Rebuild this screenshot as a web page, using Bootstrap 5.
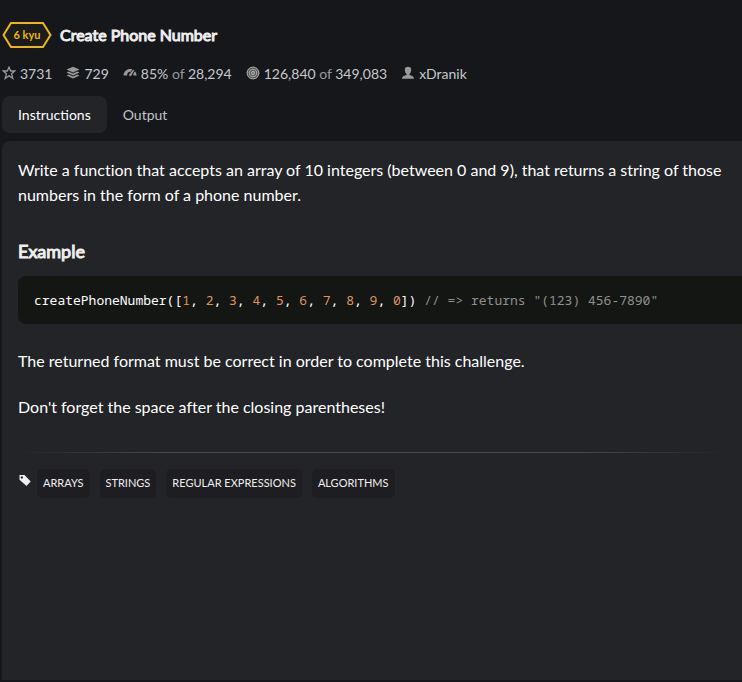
<!DOCTYPE html>
<html lang="en" data-bs-theme="dark">
<head>
<meta charset="utf-8">
<meta name="viewport" content="width=device-width, initial-scale=1">
<title>Create Phone Number</title>
<link href="https://cdn.jsdelivr.net/npm/bootstrap@5.3.0/dist/css/bootstrap.min.css" rel="stylesheet">
<style>
body { background: #16171b; color: #fff; font: 16px/25px Lato, "Open Sans", sans-serif; font-variant-ligatures: none; }
.kata { padding: 20px 0 2px 2px; }
.rank { width: 50px; height: 30px; color: #ecb613; font-size: 11px; line-height: 30px; font-weight: 700; }
.rank svg { position: absolute; inset: 0; }
.heavy { -webkit-text-stroke: 1px currentColor; font-weight: 400; color: #efefef; font-size: 18px; line-height: 30px; }
.title { font-size: 16px; }
.stats { color: #999; font-size: 14px; line-height: 24px; margin-top: 12px; gap: 14px; }
.stats a, .stats b { color: #c5c8cc; font-weight: 400; text-decoration: none; }
.stats svg { fill: #999; margin-right: 4px; vertical-align: -1px; }
.tabs { margin-top: 10px; }
.tabs .nav-link { background: transparent; border: 0; color: #c0c3c8; font-size: 14px; line-height: 21px; padding: 8px 16px; border-radius: 8px; }
.tabs .nav-link.active { background: #222427; color: #fff; }
.panel { background: #222427; margin-top: 8px; padding: 16px 0 0 16px; border-radius: 8px 0 0 0; }
.panel p { margin-bottom: 21px; padding-right: 16px; }
.panel h3 { margin: 29px 0 10px; }
.code { background: #141614; color: #fff; padding: 12px 16px; margin-bottom: 24px; border-radius: 8px 0 0 8px; font: 13px/24px "Noto Sans Mono", "DejaVu Sans Mono", monospace; }
.code code { font: inherit; color: inherit; }
.code i { font-style: normal; color: #de935f; }
.code span { color: #8e908f; }
.rule { height: 1px; margin: 33px 16px 16px 0; background: linear-gradient(90deg, transparent, #45474a 20%, #45474a 80%, transparent); }
.topics { gap: 10px; }
.topics svg { margin: 5px -5px 0 0; }
.topic { background: #1e1d21; border-radius: 5px; padding: 5px 6px 7px; font-size: 11px; line-height: 17px; color: #efefef; }
</style>
<script src="https://cdn.jsdelivr.net/npm/bootstrap@5.3.0/dist/js/bootstrap.bundle.min.js"></script>
</head>
<body>
<main class="kata min-vh-100 d-flex flex-column">
  <header class="d-flex align-items-center gap-2">
    <div class="rank position-relative text-center"><svg width="50" height="30" viewBox="0 0 50 30" fill="#1b1c1b" stroke="#ecb613" stroke-width="2" aria-hidden="true"><path d="M9 3H41L48.500 15L41 27H9L1.500 15Z"/></svg><span class="position-relative">6 kyu</span></div>
    <h1 class="heavy title m-0">Create Phone Number</h1>
  </header>
  <div class="stats d-flex flex-wrap">
    <span><svg width="14" height="14" viewBox="0 0 14 14"><path fill="none" stroke="#999" stroke-width="1.300" d="M7 1.200L8.700 5H12.800L9.600 7.800L10.800 12.400L7 9.800L3.200 12.400L4.400 7.800L1.200 5H5.300Z"/></svg><b>3731</b></span>
    <span><svg width="14" height="14" viewBox="0 0 14 14"><path d="M7 .8L13.500 3.600L7 6.400L.5 3.600Z"/><path d="M.5 6.500L2.600 5.600L7 7.500L11.400 5.600L13.500 6.500L7 9.400Z"/><path d="M.5 9.500L2.600 8.600L7 10.500L11.400 8.600L13.500 9.500L7 12.600Z"/></svg><b>729</b></span>
    <span><svg width="14" height="14" viewBox="0 0 14 14"><path d="M.5 9.500C1 4.500 5 2 9.300 3.300L7.600 5.800C5.500 5.500 4.200 7 4 9.500ZM10 3.800L11.300 4.300L8.300 9.500C7.500 10.800 5.600 10 6.200 8.600ZM12 5.200C13 6.300 13.500 8 13.500 9.500H10.500C10.500 8.800 10.400 8.400 10.300 8Z"/></svg><b>85%</b> of <b>28,294</b></span>
    <span><svg width="14" height="14" viewBox="0 0 14 14"><circle cx="7" cy="7" r="6.300" fill="#555"/><g fill="none" stroke="#aaa"><circle cx="7" cy="7" r="5.900"/><circle cx="7" cy="7" r="3.800"/><circle cx="7" cy="7" r="1.500" stroke-width="1.300"/></g></svg><b>126,840</b> of <b>349,083</b></span>
    <span><svg width="14" height="14" viewBox="0 0 14 14"><path d="M7 .8C9 .8 10.200 2 10.200 4C10.200 6 9.300 7.300 8.500 8V9C10.500 9.600 12.700 10 13 12.800H1C1.300 10 3.500 9.600 5.500 9V8C4.700 7.300 3.800 6 3.800 4C3.800 2 5 .8 7 .8Z"/></svg><a href="#">xDranik</a></span>
  </div>
  <ul class="tabs nav" role="tablist">
    <li class="nav-item" role="presentation"><button class="nav-link active" type="button" role="tab" aria-selected="true">Instructions</button></li>
    <li class="nav-item" role="presentation"><button class="nav-link" type="button" role="tab" aria-selected="false">Output</button></li>
  </ul>
  <section class="panel flex-grow-1">
    <p>Write a function that accepts an array of 10 integers (between 0 and 9), that returns a string of those numbers in the form of a phone number.</p>
    <h3 class="heavy">Example</h3>
    <pre class="code"><code>createPhoneNumber([<i>1</i>, <i>2</i>, <i>3</i>, <i>4</i>, <i>5</i>, <i>6</i>, <i>7</i>, <i>8</i>, <i>9</i>, <i>0</i>]) <span>// =&gt; returns "(123) 456-7890"</span></code></pre>
    <p>The returned format must be correct in order to complete this challenge.</p>
    <p>Don't forget the space after the closing parentheses!</p>
    <div class="rule"></div>
    <div class="topics d-flex flex-wrap">
      <svg width="14" height="14" viewBox="0 0 14 14" fill="#efefef" aria-hidden="true"><path fill-rule="evenodd" d="M1.500 1H6.500L12.700 7.500L8.500 12L1.500 5.800ZM3.800 2.300A1.200 1.200 0 1 0 3.900 2.300Z"/></svg>
      <span class="topic">ARRAYS</span><span class="topic">STRINGS</span><span class="topic">REGULAR EXPRESSIONS</span><span class="topic">ALGORITHMS</span>
    </div>
  </section>
</main>
</body>
</html>
